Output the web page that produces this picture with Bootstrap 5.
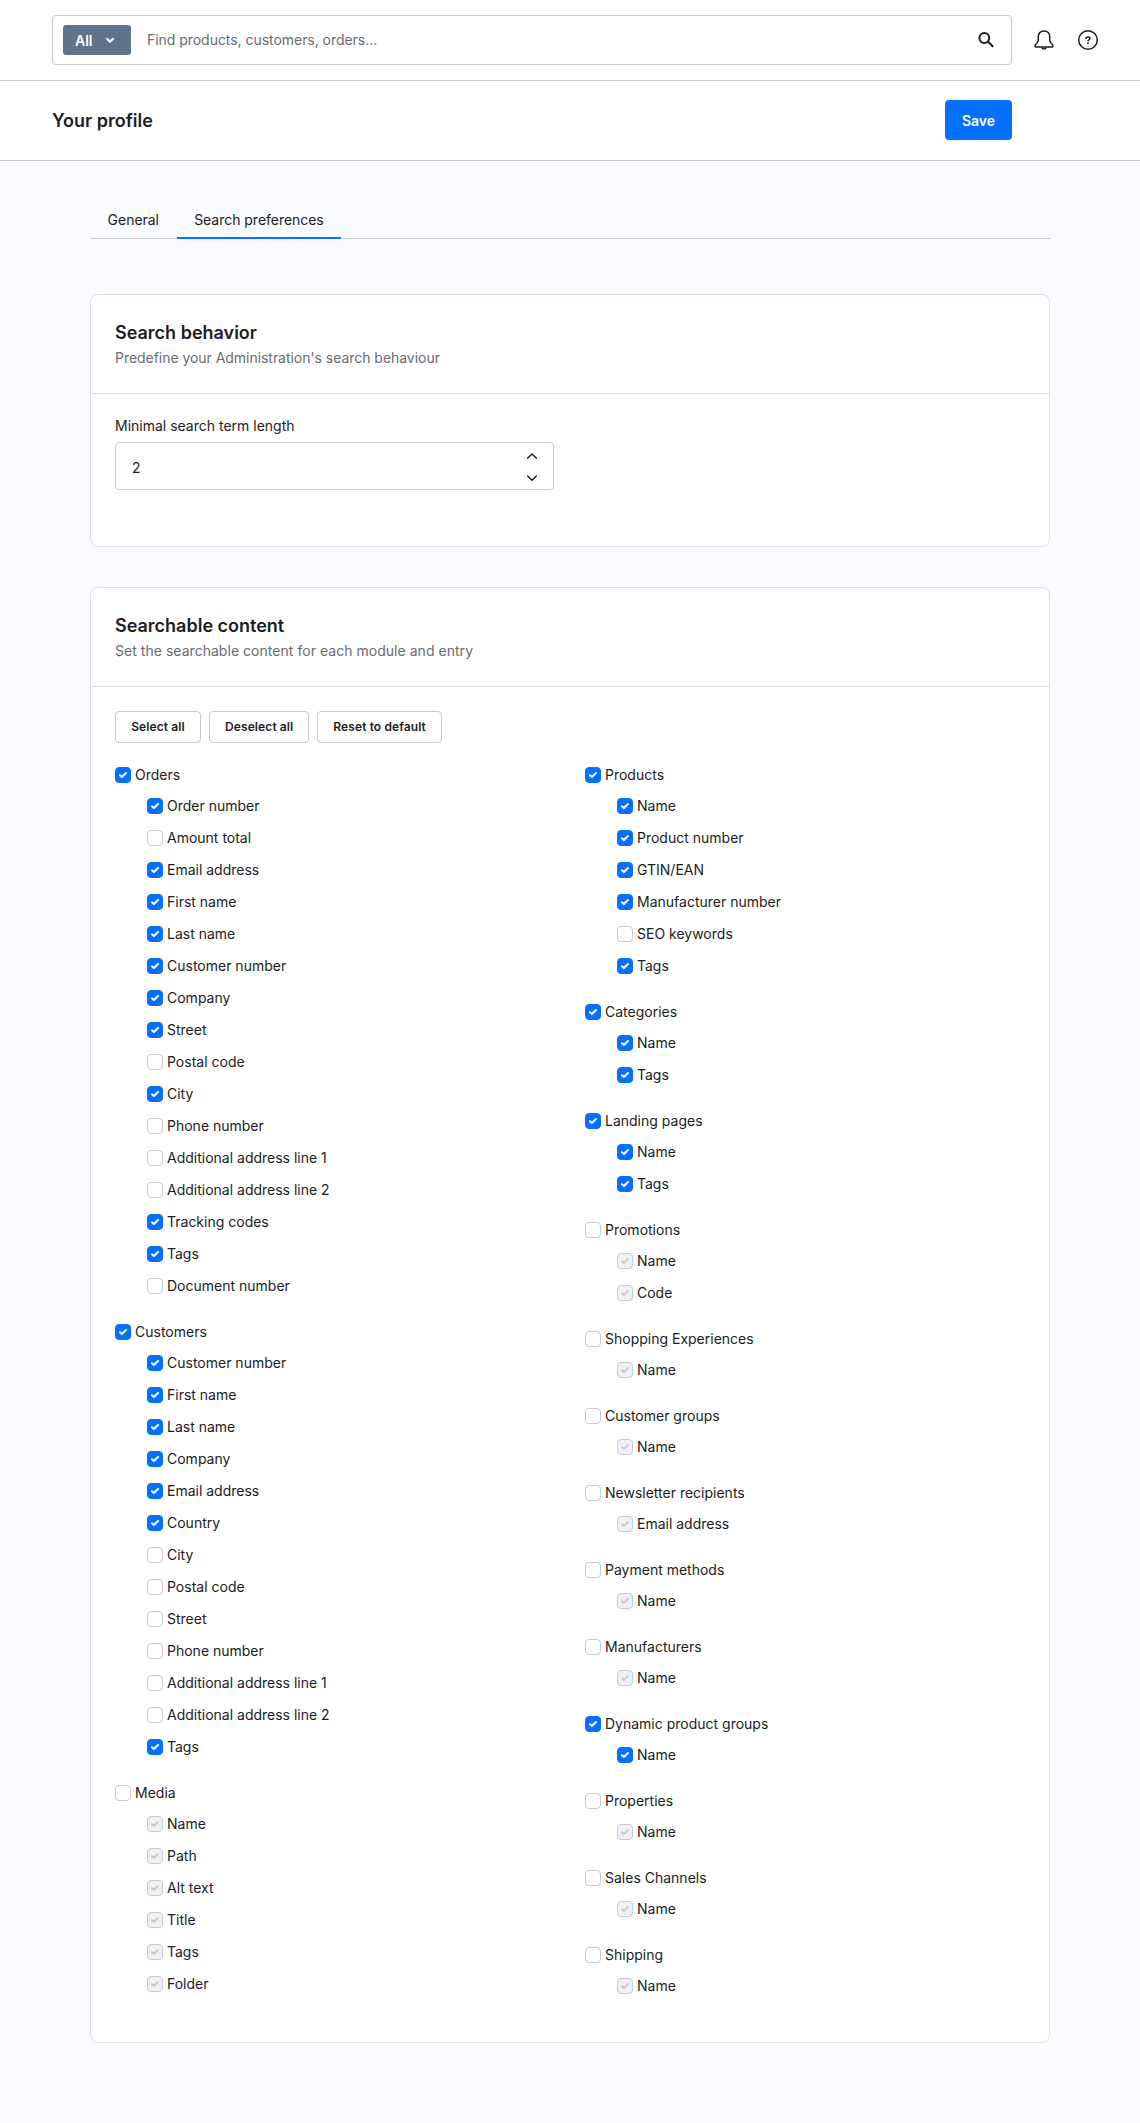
<!DOCTYPE html>
<html lang="en">
<head>
<meta charset="utf-8">
<meta name="viewport" content="width=device-width, initial-scale=1">
<title>Your profile</title>
<link href="https://cdn.jsdelivr.net/npm/bootstrap@5.3.0/dist/css/bootstrap.min.css" rel="stylesheet">
<style>
  :root {
    --ink: #1c1c21;
    --muted: #6b6b70;
    --line: #cacad1;
    --card-line: #dfdfe8;
    --brand: #0870ff;
  }
  body {
    font-family: Inter, "Liberation Sans", sans-serif;
    font-size: 14px;
    line-height: 20px;
    color: var(--ink);
    background: #fafbff;
    min-height: 2123px;
  }
  .top-bar, .page-bar { border-bottom: 1px solid var(--line); padding-left: 52px; }
  .top-bar { height: 81px; gap: 22px; }
  .page-bar { height: 80px; padding-right: 128px; padding-bottom: 1px; }
  .search-box { width: 960px; height: 50px; border: 1px solid var(--line); border-radius: 4px; padding: 0 17px 0 10px; }
  .type-btn { width: 68px; height: 30px; padding: 2px 16px 0 12px; background: #5f748b; color: #fff; font-size: 14px; line-height: 20px; font-weight: 600; border-radius: 3px; border: 0; }
  .search-input { border: 0; padding: 0 0 1px 16px; font-size: 14px; line-height: 20px; height: 30px; color: var(--ink); background: transparent; letter-spacing: -.04px; }
  .search-input::placeholder { color: var(--muted); opacity: 1; }
  .page-title { font-size: 18px; line-height: 24px; font-weight: 600; padding-top: 2px; }
  .btn-save { width: 67px; height: 40px; padding: 0; background: var(--brand); color: #fff; font-size: 14px; font-weight: 600; border-radius: 4px; border: 0; }
  .content-col { width: 960px; margin: 38px auto 0; }
  .pref-tabs { height: 40px; border-bottom: 1px solid var(--line); margin-bottom: 55px; }
  .pref-tabs .nav-link { height: 40px; padding: 11px 17.6px 9px; color: var(--ink); font-size: 14px; line-height: 20px; letter-spacing: -.03px; border-bottom: 2px solid transparent; }
  .pref-tabs .nav-link.active { border-color: var(--brand); }
  .pref-card { border: 1px solid var(--card-line); border-radius: 8px; margin-bottom: 40px; }
  .pref-card .card-header { background: transparent; border-bottom: 1px solid var(--card-line); padding: 24px; height: 99px; }
  .pref-card .card-body { padding: 24px 24px 48px; }
  .card-heading { font-size: 18px; line-height: 28px; font-weight: 600; margin: 0; }
  .card-sub { color: var(--muted); line-height: 22px; margin: 0; letter-spacing: .035px; }
  .sub-tight { letter-spacing: -.04px; }
  .pref-card .behavior-body { height: 152px; flex: none; }
  .field-label { line-height: 16px; }
  .num-field { width: 439px; height: 48px; border: 1px solid var(--line); border-radius: 4px; padding: 2px 15px 0 0; }
  .num-field input { border: 0; padding: 0 16px; font-size: 14px; color: var(--ink); background: transparent; }
  .btn-small { height: 32px; min-width: 86px; padding: 0 15px; border: 1px solid var(--line); border-radius: 4px; background: #fff; color: var(--ink); font-size: 12px; font-weight: 600; line-height: 30px; letter-spacing: .1px; }
  .pref-col { width: 470px; flex: none; display: flex; flex-direction: column; gap: 30px; }
  .pref-col + .pref-col { width: 440px; }
  .pref-list { margin: 15px 0 0 32px; display: flex; flex-direction: column; gap: 16px; }
  .pref-check { display: flex; align-items: center; gap: 4px; height: 16px; min-height: 0; margin: 0; padding: 0; line-height: 16px; }
  .pref-check .form-check-input {
    float: none; margin: 0; width: 16px; height: 16px; flex: none;
    border: 1px solid var(--line); border-radius: 4px; background-color: #fff; background-size: 16px 16px; background-position: center;
  }
  .pref-check .form-check-input:checked {
    background-color: var(--brand); border-color: var(--brand);
    background-image: url("data:image/svg+xml,%3csvg xmlns='http://www.w3.org/2000/svg' viewBox='0 0 16 16'%3e%3cpath fill='none' stroke='%23fff' stroke-width='2' stroke-linecap='round' stroke-linejoin='round' d='M5 8.2 6.9 10 11 6'/%3e%3c/svg%3e");
  }
  .pref-check .form-check-input:disabled { opacity: 1; background-color: #f0f1f7; border-color: var(--line); }
  .pref-check .form-check-input:disabled ~ * { opacity: 1; }
  .pref-check .form-check-input:disabled:checked {
    background-image: url("data:image/svg+xml,%3csvg xmlns='http://www.w3.org/2000/svg' viewBox='0 0 16 16'%3e%3cpath fill='none' stroke='%23cacad1' stroke-width='2' stroke-linecap='round' stroke-linejoin='round' d='M5 8.2 6.9 10 11 6'/%3e%3c/svg%3e");
  }
</style>
</head>
<body>
<header class="top-bar bg-white d-flex align-items-center">
  <div class="search-box d-flex align-items-center">
    <button class="btn type-btn d-flex align-items-center justify-content-between flex-shrink-0" type="button">All
      <svg width="10" height="8" viewBox="0 0 10 8" fill="none" stroke="#fff" stroke-width="2" stroke-linecap="round" stroke-linejoin="round"><path d="M2 1.7 5 4.7 8 1.7"/></svg>
    </button>
    <input class="form-control shadow-none search-input" type="text" placeholder="Find products, customers, orders...">
    <svg class="flex-shrink-0" width="16" height="16" viewBox="0 0 16 16" fill="none" stroke="#1c1c21" stroke-width="2" stroke-linecap="round"><circle cx="6.3" cy="6" r="4.9"/><path d="M10.2 9.8 14.6 14.2"/></svg>
  </div>
  <svg width="20" height="22" viewBox="0 0 20 22" fill="none" stroke="#1c1c21" stroke-width="1.5" stroke-linejoin="round"><path d="M10 2C6.4 2 4.3 4.5 4.3 7.6V11.2C4.3 13.7 1 15 1 17.2C1 17.8 1.3 18.1 1.8 18.1H18.2C18.7 18.1 19 17.8 19 17.2C19 15 15.7 13.7 15.7 11.2V7.6C15.7 4.5 13.6 2 10 2Z"/><path d="M7.9 18.3C8.2 20.7 11.8 20.7 12.1 18.3"/></svg>
  <svg width="24" height="22" viewBox="-1 0 24 22" fill="none" stroke="#1c1c21" stroke-width="1.5" stroke-linecap="round"><circle cx="11" cy="11" r="9.3"/><path d="M9.1 9.6C9.1 7.4 12.9 7.4 12.9 9.6C12.9 10.9 11 10.8 11 12.1"/><circle cx="11" cy="14.2" r=".85" fill="#1c1c21" stroke="none"/></svg>
</header>
<div class="page-bar bg-white d-flex align-items-center justify-content-between">
  <h1 class="page-title m-0">Your profile</h1>
  <button class="btn btn-save" type="button">Save</button>
</div>
<main class="content-col">
  <nav class="nav pref-tabs">
    <a class="nav-link" href="#">General</a>
    <a class="nav-link active" href="#">Search preferences</a>
  </nav>

  <section class="card pref-card">
    <div class="card-header">
      <h2 class="card-heading">Search behavior</h2>
      <p class="card-sub sub-tight">Predefine your Administration's search behaviour</p>
    </div>
    <div class="card-body behavior-body">
      <label class="field-label d-block mb-2" for="minLength">Minimal search term length</label>
      <div class="num-field d-flex align-items-center">
        <input class="form-control shadow-none" id="minLength" type="text" value="2">
        <svg class="flex-shrink-0" width="12" height="30" viewBox="0 0 12 30" fill="none" stroke="#1c1c21" stroke-width="1.4" stroke-linecap="round" stroke-linejoin="round"><path d="M1.6 6.3 6 2 10.4 6.3M1.6 24 6 28.3 10.4 24"/></svg>
      </div>
    </div>
  </section>

  <section class="card pref-card mb-0">
    <div class="card-header">
      <h2 class="card-heading">Searchable content</h2>
      <p class="card-sub">Set the searchable content for each module and entry</p>
    </div>
    <div class="card-body">
      <div class="d-flex gap-2 mb-4">
        <button class="btn btn-small" type="button">Select all</button>
        <button class="btn btn-small" type="button">Deselect all</button>
        <button class="btn btn-small" type="button">Reset to default</button>
      </div>
      <div class="d-flex">
        <div class="pref-col">
          <div>
            <label class="form-check pref-check"><input class="form-check-input" type="checkbox" checked>Orders</label>
            <div class="pref-list">
              <label class="form-check pref-check"><input class="form-check-input" type="checkbox" checked>Order number</label>
              <label class="form-check pref-check"><input class="form-check-input" type="checkbox">Amount total</label>
              <label class="form-check pref-check"><input class="form-check-input" type="checkbox" checked>Email address</label>
              <label class="form-check pref-check"><input class="form-check-input" type="checkbox" checked>First name</label>
              <label class="form-check pref-check"><input class="form-check-input" type="checkbox" checked>Last name</label>
              <label class="form-check pref-check"><input class="form-check-input" type="checkbox" checked>Customer number</label>
              <label class="form-check pref-check"><input class="form-check-input" type="checkbox" checked>Company</label>
              <label class="form-check pref-check"><input class="form-check-input" type="checkbox" checked>Street</label>
              <label class="form-check pref-check"><input class="form-check-input" type="checkbox">Postal code</label>
              <label class="form-check pref-check"><input class="form-check-input" type="checkbox" checked>City</label>
              <label class="form-check pref-check"><input class="form-check-input" type="checkbox">Phone number</label>
              <label class="form-check pref-check"><input class="form-check-input" type="checkbox">Additional address line 1</label>
              <label class="form-check pref-check"><input class="form-check-input" type="checkbox">Additional address line 2</label>
              <label class="form-check pref-check"><input class="form-check-input" type="checkbox" checked>Tracking codes</label>
              <label class="form-check pref-check"><input class="form-check-input" type="checkbox" checked>Tags</label>
              <label class="form-check pref-check"><input class="form-check-input" type="checkbox">Document number</label>
            </div>
          </div>
          <div>
            <label class="form-check pref-check"><input class="form-check-input" type="checkbox" checked>Customers</label>
            <div class="pref-list">
              <label class="form-check pref-check"><input class="form-check-input" type="checkbox" checked>Customer number</label>
              <label class="form-check pref-check"><input class="form-check-input" type="checkbox" checked>First name</label>
              <label class="form-check pref-check"><input class="form-check-input" type="checkbox" checked>Last name</label>
              <label class="form-check pref-check"><input class="form-check-input" type="checkbox" checked>Company</label>
              <label class="form-check pref-check"><input class="form-check-input" type="checkbox" checked>Email address</label>
              <label class="form-check pref-check"><input class="form-check-input" type="checkbox" checked>Country</label>
              <label class="form-check pref-check"><input class="form-check-input" type="checkbox">City</label>
              <label class="form-check pref-check"><input class="form-check-input" type="checkbox">Postal code</label>
              <label class="form-check pref-check"><input class="form-check-input" type="checkbox">Street</label>
              <label class="form-check pref-check"><input class="form-check-input" type="checkbox">Phone number</label>
              <label class="form-check pref-check"><input class="form-check-input" type="checkbox">Additional address line 1</label>
              <label class="form-check pref-check"><input class="form-check-input" type="checkbox">Additional address line 2</label>
              <label class="form-check pref-check"><input class="form-check-input" type="checkbox" checked>Tags</label>
            </div>
          </div>
          <div>
            <label class="form-check pref-check"><input class="form-check-input" type="checkbox">Media</label>
            <div class="pref-list">
              <label class="form-check pref-check"><input class="form-check-input" type="checkbox" checked disabled>Name</label>
              <label class="form-check pref-check"><input class="form-check-input" type="checkbox" checked disabled>Path</label>
              <label class="form-check pref-check"><input class="form-check-input" type="checkbox" checked disabled>Alt text</label>
              <label class="form-check pref-check"><input class="form-check-input" type="checkbox" checked disabled>Title</label>
              <label class="form-check pref-check"><input class="form-check-input" type="checkbox" checked disabled>Tags</label>
              <label class="form-check pref-check"><input class="form-check-input" type="checkbox" checked disabled>Folder</label>
            </div>
          </div>
        </div>
        <div class="pref-col">
          <div>
            <label class="form-check pref-check"><input class="form-check-input" type="checkbox" checked>Products</label>
            <div class="pref-list">
              <label class="form-check pref-check"><input class="form-check-input" type="checkbox" checked>Name</label>
              <label class="form-check pref-check"><input class="form-check-input" type="checkbox" checked>Product number</label>
              <label class="form-check pref-check"><input class="form-check-input" type="checkbox" checked>GTIN/EAN</label>
              <label class="form-check pref-check"><input class="form-check-input" type="checkbox" checked>Manufacturer number</label>
              <label class="form-check pref-check"><input class="form-check-input" type="checkbox">SEO keywords</label>
              <label class="form-check pref-check"><input class="form-check-input" type="checkbox" checked>Tags</label>
            </div>
          </div>
          <div>
            <label class="form-check pref-check"><input class="form-check-input" type="checkbox" checked>Categories</label>
            <div class="pref-list">
              <label class="form-check pref-check"><input class="form-check-input" type="checkbox" checked>Name</label>
              <label class="form-check pref-check"><input class="form-check-input" type="checkbox" checked>Tags</label>
            </div>
          </div>
          <div>
            <label class="form-check pref-check"><input class="form-check-input" type="checkbox" checked>Landing pages</label>
            <div class="pref-list">
              <label class="form-check pref-check"><input class="form-check-input" type="checkbox" checked>Name</label>
              <label class="form-check pref-check"><input class="form-check-input" type="checkbox" checked>Tags</label>
            </div>
          </div>
          <div>
            <label class="form-check pref-check"><input class="form-check-input" type="checkbox">Promotions</label>
            <div class="pref-list">
              <label class="form-check pref-check"><input class="form-check-input" type="checkbox" checked disabled>Name</label>
              <label class="form-check pref-check"><input class="form-check-input" type="checkbox" checked disabled>Code</label>
            </div>
          </div>
          <div>
            <label class="form-check pref-check"><input class="form-check-input" type="checkbox">Shopping Experiences</label>
            <div class="pref-list">
              <label class="form-check pref-check"><input class="form-check-input" type="checkbox" checked disabled>Name</label>
            </div>
          </div>
          <div>
            <label class="form-check pref-check"><input class="form-check-input" type="checkbox">Customer groups</label>
            <div class="pref-list">
              <label class="form-check pref-check"><input class="form-check-input" type="checkbox" checked disabled>Name</label>
            </div>
          </div>
          <div>
            <label class="form-check pref-check"><input class="form-check-input" type="checkbox">Newsletter recipients</label>
            <div class="pref-list">
              <label class="form-check pref-check"><input class="form-check-input" type="checkbox" checked disabled>Email address</label>
            </div>
          </div>
          <div>
            <label class="form-check pref-check"><input class="form-check-input" type="checkbox">Payment methods</label>
            <div class="pref-list">
              <label class="form-check pref-check"><input class="form-check-input" type="checkbox" checked disabled>Name</label>
            </div>
          </div>
          <div>
            <label class="form-check pref-check"><input class="form-check-input" type="checkbox">Manufacturers</label>
            <div class="pref-list">
              <label class="form-check pref-check"><input class="form-check-input" type="checkbox" checked disabled>Name</label>
            </div>
          </div>
          <div>
            <label class="form-check pref-check"><input class="form-check-input" type="checkbox" checked>Dynamic product groups</label>
            <div class="pref-list">
              <label class="form-check pref-check"><input class="form-check-input" type="checkbox" checked>Name</label>
            </div>
          </div>
          <div>
            <label class="form-check pref-check"><input class="form-check-input" type="checkbox">Properties</label>
            <div class="pref-list">
              <label class="form-check pref-check"><input class="form-check-input" type="checkbox" checked disabled>Name</label>
            </div>
          </div>
          <div>
            <label class="form-check pref-check"><input class="form-check-input" type="checkbox">Sales Channels</label>
            <div class="pref-list">
              <label class="form-check pref-check"><input class="form-check-input" type="checkbox" checked disabled>Name</label>
            </div>
          </div>
          <div>
            <label class="form-check pref-check"><input class="form-check-input" type="checkbox">Shipping</label>
            <div class="pref-list">
              <label class="form-check pref-check"><input class="form-check-input" type="checkbox" checked disabled>Name</label>
            </div>
          </div>
        </div>
      </div>
    </div>
  </section>
</main>
<script src="https://cdn.jsdelivr.net/npm/bootstrap@5.3.0/dist/js/bootstrap.bundle.min.js"></script>
</body>
</html>
